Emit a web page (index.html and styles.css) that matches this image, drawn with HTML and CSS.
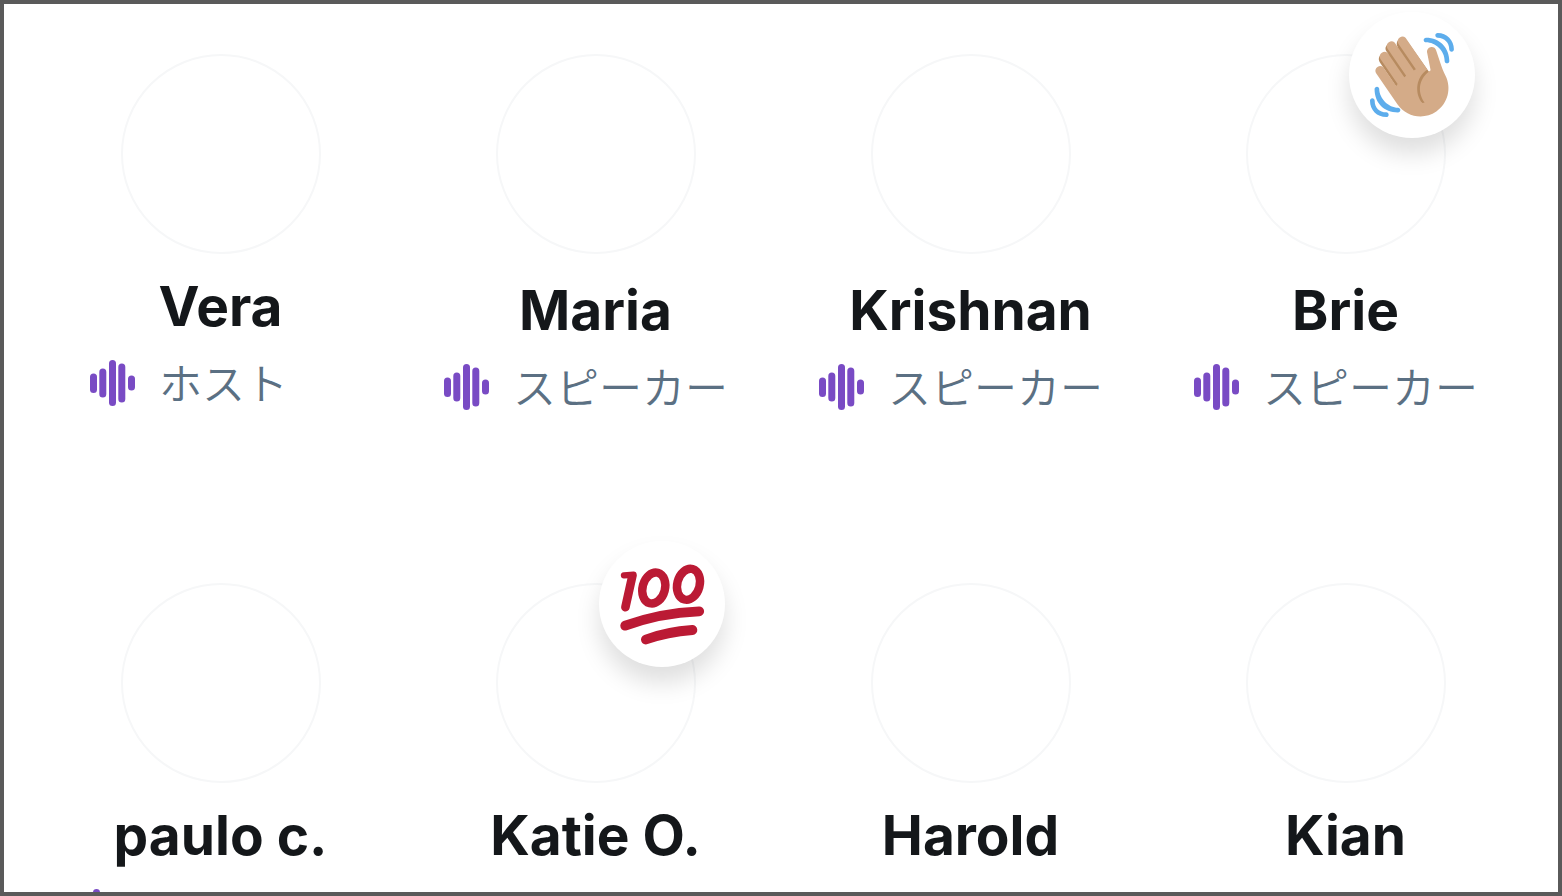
FILE: index.html
```html
<!DOCTYPE html>
<html lang="ja">
<head>
    <meta charset="UTF-8">
    <meta name="viewport" content="width=device-width, initial-scale=1.0">
    <title>Space</title>
    <link rel="stylesheet" href="styles.css">
</head>
<body>
    <svg class="sprite" aria-hidden="true">
        <symbol id="wave" viewBox="0 0 45 46">
            <rect x="0" y="13.5" width="7" height="19.5" rx="3.5"/>
            <rect x="9.3" y="8.5" width="7" height="29" rx="3.5"/>
            <rect x="19" y="0" width="7" height="46" rx="3.5"/>
            <rect x="28.3" y="3.5" width="7" height="39" rx="3.5"/>
            <rect x="38" y="15.5" width="7" height="15" rx="3.5"/>
        </symbol>
    </svg>
    <main class="space">
        <ul class="people">
            <li class="person">
                <div class="avatar"></div>
                <h2 class="name">Vera</h2>
                <p class="role role-host"><svg class="wave"><use href="#wave"/></svg><span class="label">ホスト</span></p>
            </li>
            <li class="person speaker">
                <div class="avatar"></div>
                <h2 class="name">Maria</h2>
                <p class="role"><svg class="wave"><use href="#wave"/></svg><span class="label">スピーカー</span></p>
            </li>
            <li class="person speaker">
                <div class="avatar"></div>
                <h2 class="name">Krishnan</h2>
                <p class="role"><svg class="wave"><use href="#wave"/></svg><span class="label">スピーカー</span></p>
            </li>
            <li class="person speaker">
                <div class="avatar">
                    <span class="reaction">
                        <svg class="emoji" viewBox="0 0 36 36" role="img" aria-label="👋🏼">
                            <path fill="#b78b60" d="M4.861 9.147c.94-.657 2.357-.531 3.201.166l-.968-1.407c-.779-1.111-.5-2.313.612-3.093 1.112-.777 4.263 1.312 4.263 1.312-.786-1.122-.639-2.544.483-3.331 1.122-.784 2.67-.513 3.456.611l10.42 14.72L25 31l-11.083-4.042L4.25 12.625c-.793-1.129-.519-2.686.611-3.478z"/>
                            <path fill="#d4ab88" d="M2.695 17.336s-1.132-1.65.519-2.781c1.649-1.131 2.78.518 2.78.518l5.251 7.658c.181-.302.379-.6.6-.894L4.557 11.21s-1.131-1.649.519-2.78c1.649-1.131 2.78.518 2.78.518l6.855 9.997c.255-.208.516-.417.785-.622L7.549 6.732s-1.131-1.649.519-2.78c1.649-1.131 2.78.518 2.78.518l7.947 11.589c.292-.179.581-.334.871-.498L12.238 4.729s-1.131-1.649.518-2.78c1.649-1.131 2.78.518 2.78.518l7.854 11.453 1.194 1.742c-4.948 3.394-5.419 9.779-2.592 13.902.565.825 1.39.26 1.39.26-3.393-4.949-2.357-10.51 2.592-13.903L24.515 8.62s-.545-1.924 1.378-2.47c1.924-.545 2.47 1.379 2.47 1.379l1.685 5.004c.668 1.984 1.379 3.961 2.32 5.831 2.657 5.28 1.07 11.842-3.94 15.279-5.465 3.747-12.936 2.354-16.684-3.11L2.695 17.336z"/>
                            <g fill="#5dadec">
                                <path d="M12 32.042C8 32.042 3.958 28 3.958 24c0-.553-.405-1-.958-1s-1.042.447-1.042 1C1.958 30 6 34.042 12 34.042c.553 0 1-.489 1-1.042s-.447-.958-1-.958z"/>
                                <path d="M7 34c-3 0-5-2-5-5 0-.553-.447-1-1-1s-1 .447-1 1c0 4 3 7 7 7 .553 0 1-.447 1-1s-.447-1-1-1zM24 2c-.552 0-1 .448-1 1s.448 1 1 1c4 0 8 3.589 8 8 0 .552.448 1 1 1s1-.448 1-1c0-5.514-4-10-10-10z"/>
                                <path d="M29 .042c-.552 0-1 .406-1 .958s.448 1.042 1 1.042c3 0 4.958 2.225 4.958 4.958 0 .552.489 1 1.042 1s.958-.448.958-1C35.958 3.163 33 .042 29 .042z"/>
                            </g>
                        </svg>
                    </span>
                </div>
                <h2 class="name">Brie</h2>
                <p class="role"><svg class="wave"><use href="#wave"/></svg><span class="label">スピーカー</span></p>
            </li>
            <li class="person">
                <div class="avatar"></div>
                <h2 class="name">paulo c.</h2>
                <p class="role role-cohost"><svg class="wave"><use href="#wave"/></svg></p>
            </li>
            <li class="person">
                <div class="avatar">
                    <span class="reaction">
                        <svg class="emoji" viewBox="0 0 84 84" role="img" aria-label="💯" fill="none" stroke="#bb1a34" stroke-linecap="round" stroke-linejoin="round">
                            <path stroke-width="6.4" d="M4 13.4L13.5 12.8"/>
                            <path stroke-width="8.6" d="M12.3 14.2L5.4 45.2"/>
                            <ellipse stroke-width="8.4" cx="33.8" cy="26" rx="11.2" ry="15.8" transform="rotate(15 33.8 26)"/>
                            <ellipse stroke-width="8.4" cx="68.5" cy="22.3" rx="11.2" ry="15.8" transform="rotate(15 68.5 22.3)"/>
                            <path stroke-width="9.8" d="M5.2 63.7Q39 51 79.2 49.3"/>
                            <path stroke-width="9.8" d="M25.9 77.5Q47 69.8 72.4 68"/>
                        </svg>
                    </span>
                </div>
                <h2 class="name">Katie O.</h2>
            </li>
            <li class="person">
                <div class="avatar"></div>
                <h2 class="name">Harold</h2>
            </li>
            <li class="person">
                <div class="avatar"></div>
                <h2 class="name">Kian</h2>
            </li>
        </ul>
    </main>
</body>
</html>
```

FILE: styles.css
```css
* {
    box-sizing: border-box;
}
body {
    margin: 0;
    background: #fff;
    color: #14171a;
    font-family: Inter, "Noto Sans CJK JP", sans-serif;
}
.sprite {
    display: none;
}
.space {
    height: 100vh;
    overflow: hidden;
    border: 4px solid #5a5a5a;
    padding: 50px 25px 0 29px;
}
.people {
    display: grid;
    grid-template-columns: repeat(4, 1fr);
    grid-auto-rows: 400px;
    row-gap: 129px;
    margin: 0;
    padding: 0;
    list-style: none;
}
.avatar {
    position: relative;
    width: 200px;
    height: 200px;
    margin: 0 auto 20px;
    border: 2px solid #f6f7f8;
    border-radius: 50%;
}
.name {
    margin: 0;
    font-size: 55px;
    font-weight: 700;
    line-height: 64px;
    text-align: center;
}
.speaker .name {
    padding-top: 4px;
}
.role {
    display: flex;
    align-items: center;
    gap: 24px;
    height: 60px;
    margin: 15px 0 0;
    padding-left: 36px;
    color: #5b7083;
    font-family: "Noto Sans CJK JP", sans-serif;
    font-size: 43px;
    font-weight: 350;
    line-height: 60px;
    white-space: nowrap;
}
.role-host {
    padding-left: 57px;
}
.role-cohost {
    padding-left: 41px;
}
.label {
    padding-bottom: 4px;
}
.wave {
    flex: none;
    width: 45px;
    height: 46px;
    fill: #794bc4;
}
.reaction {
    position: absolute;
    top: -44px;
    right: -31px;
    display: flex;
    align-items: center;
    justify-content: center;
    width: 126px;
    height: 126px;
    border-radius: 50%;
    background: #fff;
    box-shadow: 0 16px 24px rgba(0, 0, 0, 0.13);
}
.emoji {
    width: 84px;
    height: 84px;
    overflow: visible;
}
```
